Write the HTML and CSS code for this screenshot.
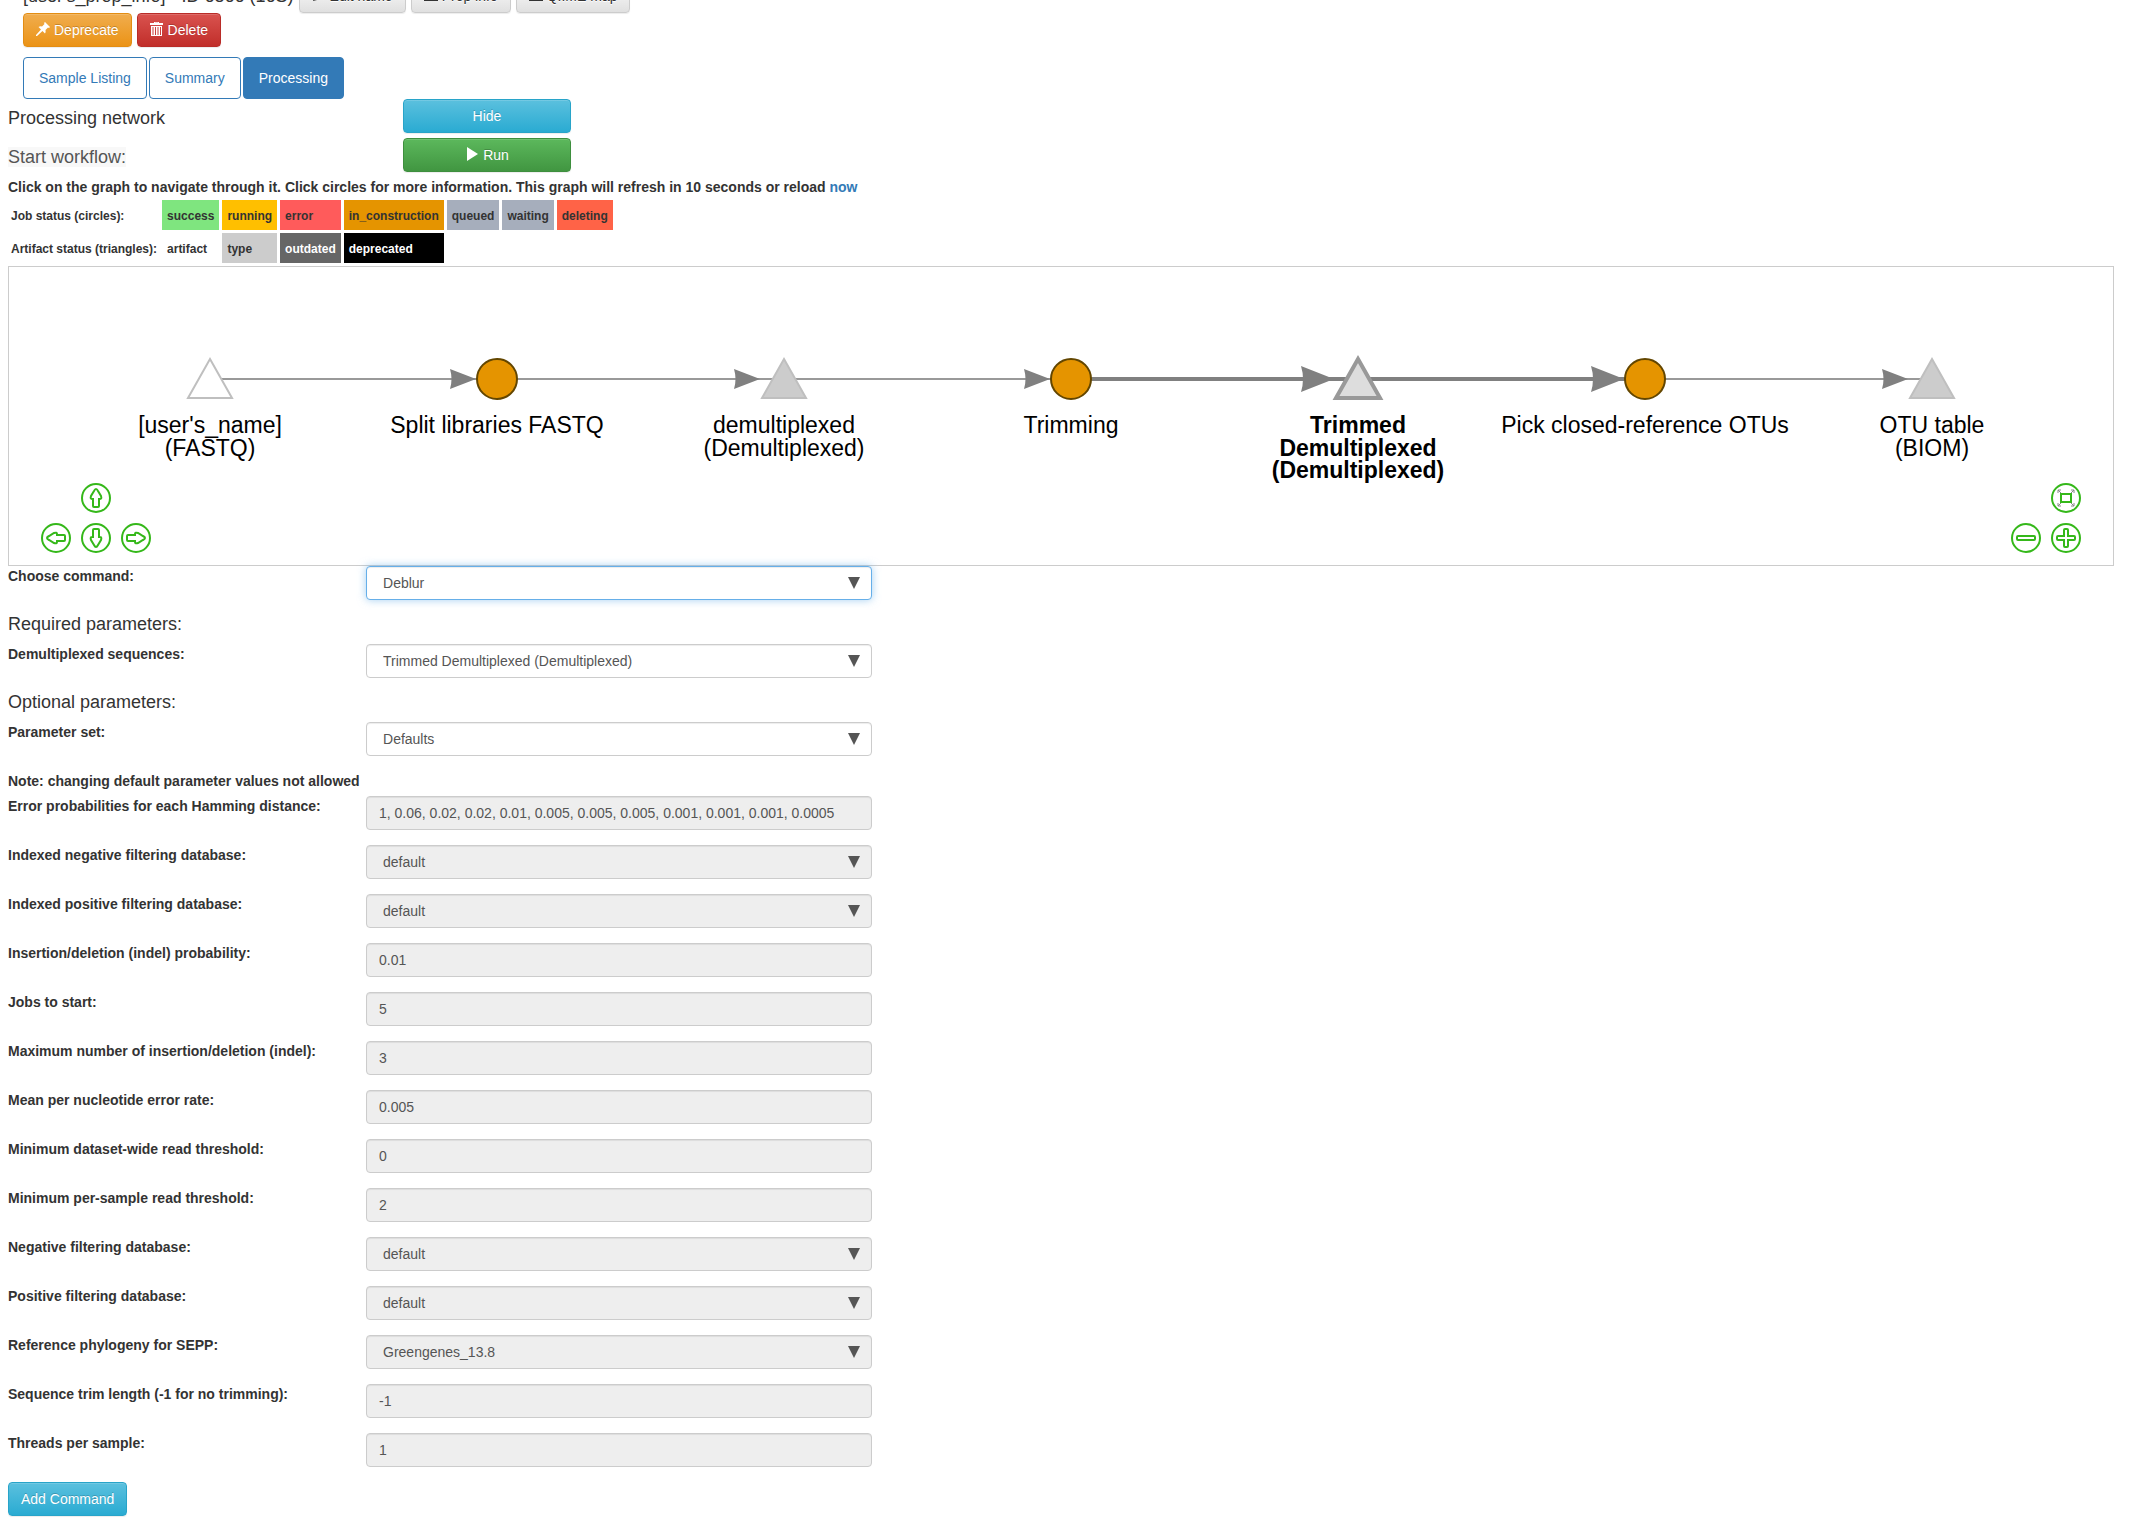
FILE: index.html
```html
<!DOCTYPE html>
<html lang="en">
<head>
<meta charset="utf-8">
<title>Processing</title>
<link rel="stylesheet" href="styles.css">
</head>
<body>
<header class="prep">
  <div class="prep-title">
    <h4 class="prep-name">[user's_prop_info] - ID 6866 (16S)</h4>
    <button type="button" class="btn btn-default"><svg class="icon" viewBox="0 0 14 14"><path d="M1 13l1-4 7-7 3 3-7 7z"/></svg>Edit name</button>
    <button type="button" class="btn btn-default"><svg class="icon" viewBox="0 0 14 14"><path d="M5 0h4v4h3L7 9 2 4h3zM0 9h3l2 2h4l2-2h3v4H0z"/></svg>Prep info</button>
    <button type="button" class="btn btn-default"><svg class="icon" viewBox="0 0 14 14"><path d="M5 0h4v4h3L7 9 2 4h3zM0 9h3l2 2h4l2-2h3v4H0z"/></svg>QIIME map</button>
  </div>
  <div class="prep-actions">
    <button type="button" class="btn btn-warning"><svg class="icon" viewBox="0 0 14 14"><path d="M9 0l5 5-1 1-1-.5L9.500 8q.5 2-.5 3.500L6.500 9 1 14l-1 0 0-1 5-5.500L2.500 5Q4 4 6 4.500L8.500 2 8 1z"/></svg>Deprecate</button>
    <button type="button" class="btn btn-danger"><svg class="icon" viewBox="0 0 14 14"><path fill-rule="evenodd" d="M4 0h5v1h4v2H0V1h4zM5 .8V1h3V.8zM1 4h11v10H1zM2.500 5v8h1V5zM5 5v8h1V5zM7.500 5v8h1V5zM10 5v8h1V5z"/></svg>Delete</button>
  </div>
  <nav class="tabs">
    <a class="tab" href="#listing">Sample Listing</a>
    <a class="tab" href="#summary">Summary</a>
    <a class="tab tab-active" href="#processing">Processing</a>
  </nav>
</header>
<main>
  <div class="control-row"><h4 class="control-name">Processing network</h4><button type="button" class="btn btn-info btn-wide">Hide</button></div>
  <div class="control-row"><h4 class="control-name"><span class="muted">Start workflow:</span></h4><button type="button" class="btn btn-success btn-wide"><svg class="icon" viewBox="0 0 14 14"><path d="M2 0l11 7-11 7z"/></svg>Run</button></div>
  <p class="hint">Click on the graph to navigate through it. Click circles for more information. This graph will refresh in 10 seconds or reload <a href="#now">now</a></p>
  <table class="legend">
    <tr><th scope="row">Job status (circles):</th><td class="success">success</td><td class="running">running</td><td class="error">error</td><td class="construction">in_construction</td><td class="queued">queued</td><td class="queued">waiting</td><td class="deleting">deleting</td></tr>
    <tr><th scope="row">Artifact status (triangles):</th><td>artifact</td><td class="type">type</td><td class="outdated">outdated</td><td class="deprecated">deprecated</td></tr>
  </table>
  <section class="network" aria-label="Processing network">
    <svg class="graph" viewBox="0 0 2104 298">
      <g class="edges">
        <path d="M201 112H488M488 112H775M775 112H1062M1636 112H1923"/>
        <path class="selected" d="M1062 112H1349M1349 112H1636"/>
      </g>
      <g class="arrows">
        <path d="M467 112l-26-10q3 10 0 20z"/>
        <path d="M751 112l-26-10q3 10 0 20z"/>
        <path d="M1041 112l-26-10q3 10 0 20z"/>
        <path d="M1325 112l-33-13q4 13 0 26z"/>
        <path d="M1615 112l-33-13q4 13 0 26z"/>
        <path d="M1899 112l-26-10q3 10 0 20z"/>
      </g>
      <g class="artifacts">
        <path class="raw" d="M201 92l22 39h-44z"/>
        <path d="M775 92l22 39h-44z"/>
        <path class="chosen" d="M1349 92l22 39h-44z"/>
        <path d="M1923 92l22 39h-44z"/>
      </g>
      <g class="jobs"><circle cx="488" cy="112" r="20"/><circle cx="1062" cy="112" r="20"/><circle cx="1636" cy="112" r="20"/></g>
      <g class="names">
        <text x="201" y="166">[user's_name]</text><text x="201" y="189">(FASTQ)</text>
        <text x="488" y="166">Split libraries FASTQ</text>
        <text x="775" y="166">demultiplexed</text><text x="775" y="189">(Demultiplexed)</text>
        <text x="1062" y="166">Trimming</text>
        <g class="bold"><text x="1349" y="166">Trimmed</text><text x="1349" y="189">Demultiplexed</text><text x="1349" y="211">(Demultiplexed)</text></g>
        <text x="1636" y="166">Pick closed-reference OTUs</text>
        <text x="1923" y="166">OTU table</text><text x="1923" y="189">(BIOM)</text>
      </g>
    </svg>
    <div class="pad pad-move">
      <button type="button" class="round up" aria-label="Move up"><svg viewBox="0 0 30 30"><circle cx="15" cy="15" r="14"/><path d="M15 6q1 0 2 2l3 5q1 3-1 3h-1v7q0 1-1 1h-4q-1 0-1-1v-7h-1q-2 0-1-3l3-5q1-2 2-2z"/></svg></button>
      <button type="button" class="round left" aria-label="Move left"><svg viewBox="0 0 30 30"><circle cx="15" cy="15" r="14"/><path transform="rotate(-90 15 15)" d="M15 6q1 0 2 2l3 5q1 3-1 3h-1v7q0 1-1 1h-4q-1 0-1-1v-7h-1q-2 0-1-3l3-5q1-2 2-2z"/></svg></button>
      <button type="button" class="round down" aria-label="Move down"><svg viewBox="0 0 30 30"><circle cx="15" cy="15" r="14"/><path transform="rotate(180 15 15)" d="M15 6q1 0 2 2l3 5q1 3-1 3h-1v7q0 1-1 1h-4q-1 0-1-1v-7h-1q-2 0-1-3l3-5q1-2 2-2z"/></svg></button>
      <button type="button" class="round right" aria-label="Move right"><svg viewBox="0 0 30 30"><circle cx="15" cy="15" r="14"/><path transform="rotate(90 15 15)" d="M15 6q1 0 2 2l3 5q1 3-1 3h-1v7q0 1-1 1h-4q-1 0-1-1v-7h-1q-2 0-1-3l3-5q1-2 2-2z"/></svg></button>
    </div>
    <div class="pad pad-zoom">
      <button type="button" class="round fit" aria-label="Fit"><svg viewBox="0 0 30 30"><circle cx="15" cy="15" r="14"/><rect x="10" y="11" width="10" height="8"/><path class="corners" d="M7 10V7h3M7 7l3 3M20 7h3v3M23 7l-3 3M7 20v3h3M7 23l3-3M23 20v3h-3M23 23l-3-3"/></svg></button>
      <button type="button" class="round out" aria-label="Zoom out"><svg viewBox="0 0 30 30"><circle cx="15" cy="15" r="14"/><rect x="6" y="13" width="18" height="4" rx="1"/></svg></button>
      <button type="button" class="round in" aria-label="Zoom in"><svg viewBox="0 0 30 30"><circle cx="15" cy="15" r="14"/><path d="M13 7q0-1 1-1h2q1 0 1 1v6h6q1 0 1 1v2q0 1-1 1h-6v6q0 1-1 1h-2q-1 0-1-1v-6H7q-1 0-1-1v-2q0-1 1-1h6z"/></svg></button>
    </div>
  </section>
  <form class="command">
    <div class="field"><label for="cmd">Choose command:</label><span class="pick"><select id="cmd" class="control focused"><option>Deblur</option></select></span></div>
    <h4 class="group">Required parameters:</h4>
    <div class="field"><label for="seqs">Demultiplexed sequences:</label><span class="pick"><select id="seqs" class="control"><option>Trimmed Demultiplexed (Demultiplexed)</option></select></span></div>
    <h4 class="group">Optional parameters:</h4>
    <div class="field"><label for="pset">Parameter set:</label><span class="pick"><select id="pset" class="control"><option>Defaults</option></select></span></div>
    <p class="note">Note: changing default parameter values not allowed</p>
    <div class="field"><label for="p1">Error probabilities for each Hamming distance:</label><input id="p1" class="control" disabled value="1, 0.06, 0.02, 0.02, 0.01, 0.005, 0.005, 0.005, 0.001, 0.001, 0.001, 0.0005"></div>
    <div class="field"><label for="p2">Indexed negative filtering database:</label><span class="pick"><select id="p2" class="control" disabled><option>default</option></select></span></div>
    <div class="field"><label for="p3">Indexed positive filtering database:</label><span class="pick"><select id="p3" class="control" disabled><option>default</option></select></span></div>
    <div class="field"><label for="p4">Insertion/deletion (indel) probability:</label><input id="p4" class="control" disabled value="0.01"></div>
    <div class="field"><label for="p5">Jobs to start:</label><input id="p5" class="control" disabled value="5"></div>
    <div class="field"><label for="p6">Maximum number of insertion/deletion (indel):</label><input id="p6" class="control" disabled value="3"></div>
    <div class="field"><label for="p7">Mean per nucleotide error rate:</label><input id="p7" class="control" disabled value="0.005"></div>
    <div class="field"><label for="p8">Minimum dataset-wide read threshold:</label><input id="p8" class="control" disabled value="0"></div>
    <div class="field"><label for="p9">Minimum per-sample read threshold:</label><input id="p9" class="control" disabled value="2"></div>
    <div class="field"><label for="p10">Negative filtering database:</label><span class="pick"><select id="p10" class="control" disabled><option>default</option></select></span></div>
    <div class="field"><label for="p11">Positive filtering database:</label><span class="pick"><select id="p11" class="control" disabled><option>default</option></select></span></div>
    <div class="field"><label for="p12">Reference phylogeny for SEPP:</label><span class="pick"><select id="p12" class="control" disabled><option>Greengenes_13.8</option></select></span></div>
    <div class="field"><label for="p13">Sequence trim length (-1 for no trimming):</label><input id="p13" class="control" disabled value="-1"></div>
    <div class="field"><label for="p14">Threads per sample:</label><input id="p14" class="control" disabled value="1"></div>
    <button type="button" class="btn btn-info">Add Command</button>
  </form>
</main>
</body>
</html>
```
FILE: styles.css
```css
* { box-sizing: border-box; }
body {
  margin: 0;
  padding: 0 30px 21px 8px;
  overflow-x: hidden;
  font: 14px/20px "Liberation Sans", Arial, sans-serif;
  color: #333;
  background: #fff;
}
h4 { margin: 0; font-size: 18px; line-height: 20px; font-weight: 400; }
a { color: #337ab7; text-decoration: none; }

.btn {
  height: 34px;
  padding: 6px 12px;
  border: 1px solid;
  border-radius: 4px;
  font: inherit;
  color: #fff;
  text-shadow: 0 -1px 0 rgba(0, 0, 0, .2);
  box-shadow: inset 0 1px 0 rgba(255, 255, 255, .15), 0 1px 1px rgba(0, 0, 0, .075);
  white-space: nowrap;
}
.btn-default { color: #333; border-color: #ccc; background: linear-gradient(#fff, #e0e0e0); text-shadow: 0 1px 0 #fff; }
.btn-warning { border-color: #e38d13; background: linear-gradient(#f0ad4e, #eb9316); }
.btn-danger { border-color: #b92c28; background: linear-gradient(#d9534f, #c12e2a); }
.btn-info { border-color: #28a4c9; background: linear-gradient(#5bc0de, #2aabd2); }
.btn-success { border-color: #3e8f3e; background: linear-gradient(#5cb85c, #419641); }
.btn-wide { width: 168px; }
.icon { width: 14px; height: 14px; margin-right: 4px; vertical-align: -1px; fill: currentColor; }

.prep { margin-top: -21px; padding-left: 15px; }
.prep-title, .prep-actions { display: flex; align-items: center; gap: 5px; }
.prep-actions { margin-bottom: 10px; }
.tabs { display: flex; gap: 2px; }
.tab { padding: 10px 15px; border: 1px solid #337ab7; border-radius: 4px; }
.tab-active { color: #fff; background: #337ab7; }

.control-row { display: flex; align-items: flex-start; margin-bottom: 5px; }
.control-name { width: 395px; padding-top: 9px; }
.muted { color: #555; background: #f8f8f8; }
.hint { margin: 0; font-weight: 700; }
.legend { border-spacing: 3px; font-size: 12px; font-weight: 700; }
.legend th { padding: 6px 2px 4px 0; text-align: left; }
.legend td { padding: 6px 5px 4px; }
.success { background: #7fe57f; }
.running { background: #ffbf00; }
.error { background: #ff5b5b; }
.construction { background: #e59400; }
.queued { background: #a6aebc; }
.deleting { background: #ff6347; }
.type { background: #ccc; }
.outdated { color: #fff; background: #666; }
.deprecated { color: #fff; background: #000; }

.network { position: relative; border: 1px solid #ccc; }
.graph { display: block; width: 100%; }
.edges { fill: none; stroke: #999; stroke-width: 2; }
.edges .selected { stroke: #808080; stroke-width: 4; }
.arrows { fill: #808080; }
.artifacts { fill: #ccc; stroke: #bfbfbf; stroke-width: 2; }
.artifacts .raw { fill: #fff; }
.artifacts .chosen { fill: #ddd; stroke: #999; stroke-width: 4; }
.jobs { fill: #e59400; stroke: #634600; stroke-width: 2; }
.names { font-size: 23px; fill: #000; text-anchor: middle; }
.names .bold { font-weight: 700; }

.pad { position: absolute; bottom: 12px; display: grid; gap: 10px; }
.pad-move { left: 32px; grid-template: ". up ." 30px "left down right" 30px / 30px 30px 30px; }
.pad-zoom { right: 32px; grid-template: ". fit" 30px "out in" 30px / 30px 30px; }
.round { padding: 0; border: 0; background: none; }
.round svg { display: block; width: 30px; height: 30px; fill: none; stroke: #35b81a; stroke-width: 2; }
.round .corners { stroke: #888; stroke-width: 1; }
.up { grid-area: up; }
.left { grid-area: left; }
.down { grid-area: down; }
.right { grid-area: right; }
.fit { grid-area: fit; }
.out { grid-area: out; }
.in { grid-area: in; }

.field { display: grid; grid-template-columns: 17% 506px; align-items: start; margin-bottom: 15px; }
.field label, .note { font-weight: 700; }
.note { margin: 0 0 5px; }
.group { padding-bottom: 11px; line-height: 18px; }
.pick { position: relative; display: block; }
.pick::after {
  content: "";
  position: absolute;
  top: 11px;
  right: 12px;
  width: 12px;
  height: 12px;
  background: #555;
  clip-path: polygon(0 0, 100% 0, 50% 100%);
  pointer-events: none;
}
.control {
  display: block;
  width: 100%;
  height: 34px;
  padding: 6px 12px;
  border: 1px solid #ccc;
  border-radius: 4px;
  font: inherit;
  color: #555;
  background: #fff;
  box-shadow: inset 0 1px 1px rgba(0, 0, 0, .075);
  opacity: 1;
  appearance: none;
}
select.control { padding: 6px 16px; }
.control:disabled { background: #eee; }
.focused { border-color: #66afe9; box-shadow: inset 0 1px 1px rgba(0, 0, 0, .075), 0 0 8px rgba(102, 175, 233, .6); }
```
